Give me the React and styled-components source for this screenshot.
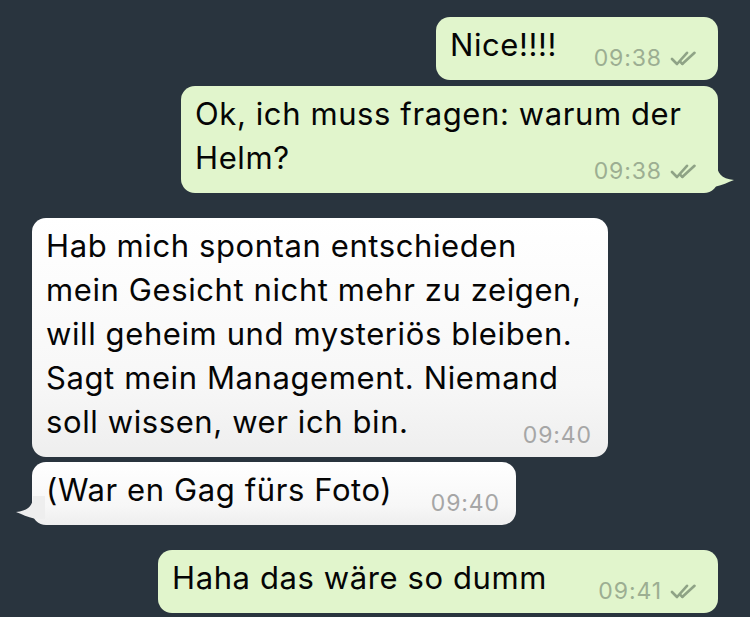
import React from "react";
import styled, { createGlobalStyle } from "styled-components";

const Global = createGlobalStyle`
  html, body { margin: 0; padding: 0; background: #29343e; }
  #root { width: 750px; height: 617px; overflow: hidden; }
`;

const Chat = styled.div`
  box-sizing: border-box;
  width: 750px;
  height: 617px;
  overflow: hidden;
  background: #29343e;
  display: flex;
  flex-direction: column;
  padding: 17px 32px 0 32px;
  font-family: Inter, "Liberation Sans", sans-serif;
`;

const Bubble = styled.div`
  position: relative;
  box-sizing: border-box;
  display: flow-root;
  align-self: ${(p) => (p.$out ? "flex-end" : "flex-start")};
  width: ${(p) => p.$w}px;
  margin-top: ${(p) => p.$gap}px;
  padding: 6px ${(p) => (p.$out ? 20 : 16)}px 11px 14px;
  border-radius: 14px;
  background: ${(p) =>
    p.$out ? "#e1f5cc" : "linear-gradient(180deg, #ffffff 0%, #f7f7f7 70%, #eeeeee 100%)"};
  color: #050505;
  font-size: 31px;
  line-height: 44px;
  letter-spacing: 0.6px;
  white-space: nowrap;
`;

const Meta = styled.span`
  float: right;
  display: flex;
  align-items: center;
  gap: 8px;
  height: 22px;
  margin: 24px 0 0 8px;
  font-size: 23px;
  line-height: 22px;
  letter-spacing: 0.9px;
  color: ${(p) => (p.$out ? "#9cae92" : "#a6a6a6")};
`;

const Ticks = styled.svg`
  width: 28px;
  height: 15px;
  margin-top: 1px;
`;

const Tail = styled.svg`
  position: absolute;
  bottom: 6px;
  width: 30px;
  height: 23px;
  ${(p) => (p.$out ? "right: -17px;" : "left: -17px; transform: scaleX(-1);")}
`;

const TailShape = ({ out, color }) => (
  <Tail $out={out} viewBox="-12 0 30 23">
    <path
      d="M-12 0 L0 0 C0 9 4 14.5 17 16 C11 18.5 5 21 -1 22.5 L-12 23 Z"
      fill={color}
    />
  </Tail>
);

const DoubleTick = () => (
  <Ticks viewBox="0 0 28 15">
    <g fill="none" stroke="#8fa386" strokeWidth="2.6" strokeLinecap="round" strokeLinejoin="round">
      <path d="M2 8 L7 13 L17 1.8" />
      <path d="M12.5 12.8 L24.5 1.8" />
      <path d="M10 10.6 L12.3 12.8" />
    </g>
  </Ticks>
);

const Message = ({ out, w, gap, time, tail, children }) => (
  <Bubble $out={out} $w={w} $gap={gap}>
    {children}
    <Meta $out={out}>
      <span>{time}</span>
      {out && <DoubleTick />}
    </Meta>
    {tail && <TailShape out={out} color={out ? "#e1f5cc" : "#eeeeee"} />}
  </Bubble>
);

export default function App() {
  return (
    <>
      <Global />
      <Chat>
        <Message out w={282} gap={0} time="09:38">
          Nice!!!!
        </Message>
        <Message out w={537} gap={6} time="09:38" tail>
          Ok, ich muss fragen: warum der
          <br />
          Helm?
        </Message>
        <Message w={576} gap={25} time="09:40">
          Hab mich spontan entschieden
          <br />
          mein Gesicht nicht mehr zu zeigen,
          <br />
          will geheim und mysteriös bleiben.
          <br />
          Sagt mein Management. Niemand
          <br />
          soll wissen, wer ich bin.
        </Message>
        <Message w={484} gap={5} time="09:40" tail>
          (War en Gag fürs Foto)
        </Message>
        <Message out w={560} gap={25} time="09:41">
          Haha das wäre so dumm
        </Message>
      </Chat>
    </>
  );
}
